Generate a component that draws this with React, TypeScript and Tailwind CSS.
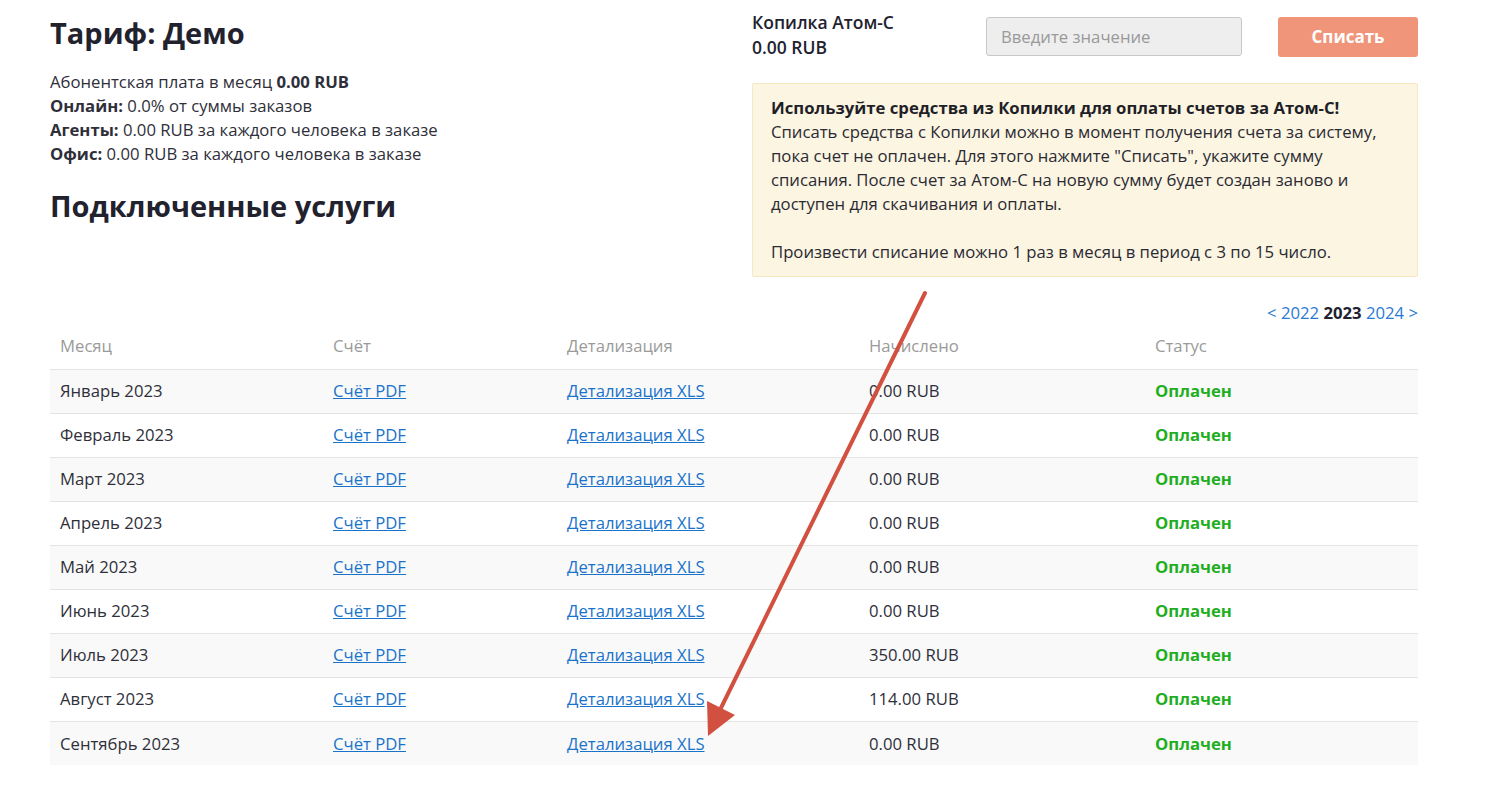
import React from "react"

const months = [
  { name: "Январь 2023", sum: "0.00 RUB" },
  { name: "Февраль 2023", sum: "0.00 RUB" },
  { name: "Март 2023", sum: "0.00 RUB" },
  { name: "Апрель 2023", sum: "0.00 RUB" },
  { name: "Май 2023", sum: "0.00 RUB" },
  { name: "Июнь 2023", sum: "0.00 RUB" },
  { name: "Июль 2023", sum: "350.00 RUB" },
  { name: "Август 2023", sum: "114.00 RUB" },
  { name: "Сентябрь 2023", sum: "0.00 RUB" },
]

export default function App() {
  return (
    <div className="relative min-h-[807px] bg-white text-[#2f2f3a] font-['Open_Sans',sans-serif] text-[16.7px]">
      <div className="w-[1368px] ml-[50px]">

        {/* Top */}
        <div className="flex justify-between">
          <div className="pt-[15px]">
            <h1 className="text-[29px] leading-[36px] font-bold text-[#22222f]">Тариф: Демо</h1>
            <div className="mt-[19px] leading-[24px]">
              <div>Абонентская плата в месяц <b>0.00 RUB</b></div>
              <div><b>Онлайн:</b> 0.0% от суммы заказов</div>
              <div><b>Агенты:</b> 0.00 RUB за каждого человека в заказе</div>
              <div><b>Офис:</b> 0.00 RUB за каждого человека в заказе</div>
            </div>
            <h2 className="mt-[22px] text-[29px] leading-[36px] font-bold text-[#22222f]">Подключенные услуги</h2>
          </div>

          <div className="w-[666px] pt-[10px]">
            <div className="flex items-start">
              <div className="w-[234px] text-[17.5px] leading-[25px] font-semibold text-[#22222f]">
                <div>Копилка Атом-С</div>
                <div>0.00 RUB</div>
              </div>
              <input
                placeholder="Введите значение"
                className="mt-[7px] w-[256px] h-[39px] px-[14px] bg-[#eeeeee] border border-[#c8c8c8] rounded-[3px] text-[16.7px] placeholder:text-[#999] outline-none"
              />
              <button className="ml-auto mt-[7px] w-[140px] h-[40px] bg-[#f0957a] rounded-[3px] text-white font-bold text-[17px]">
                Списать
              </button>
            </div>

            <div className="mt-[23px] bg-[#fcf5e1] border border-[#f6e8c3] rounded-[2px] px-[18px] pt-[12px] pb-[12px] leading-[24px] text-[#2a2a33]">
              <div className="font-bold text-[#1f1f28]">Используйте средства из Копилки для оплаты счетов за Атом-С!</div>
              <div>
                Списать средства с Копилки можно в момент получения счета за систему,
                пока счет не оплачен. Для этого нажмите "Списать", укажите сумму
                списания. После счет за Атом-С на новую сумму будет создан заново и
                доступен для скачивания и оплаты.
              </div>
              <div className="mt-[24px]">Произвести списание можно 1 раз в месяц в период с 3 по 15 число.</div>
            </div>
          </div>
        </div>

        {/* Year nav */}
        <div className="mt-[24px] text-right leading-[24px] text-[#2a7ad2]">
          <span>&lt; 2022</span> <b className="text-[#22222f]">2023</b> <span>2024 &gt;</span>
        </div>

        {/* Table */}
        <table className="w-full border-collapse">
          <thead>
            <tr className="h-[44px] text-left text-[#9a9a9a]">
              <th className="w-[273px] pl-[10px] pb-[2px] font-normal">Месяц</th>
              <th className="w-[234px] pl-[10px] pb-[2px] font-normal">Счёт</th>
              <th className="w-[302px] pl-[10px] pb-[2px] font-normal">Детализация</th>
              <th className="w-[286px] pl-[10px] pb-[2px] font-normal">Начислено</th>
              <th className="pl-[10px] pb-[2px] font-normal">Статус</th>
            </tr>
          </thead>
          <tbody>
            {months.map((m, i) => (
              <tr key={m.name} className={`h-[44px] border-t border-[#e4e4e4] ${i % 2 === 0 ? "bg-[#f9f9f9]" : "bg-white"}`}>
                <td className="pl-[10px]">{m.name}</td>
                <td className="pl-[10px]"><a className="text-[#1a73c9] underline">Счёт PDF</a></td>
                <td className="pl-[10px]"><a className="text-[#1a73c9] underline">Детализация XLS</a></td>
                <td className="pl-[10px]">{m.sum}</td>
                <td className="pl-[10px] font-bold text-[#1fae1f]">Оплачен</td>
              </tr>
            ))}
          </tbody>
        </table>
      </div>

      {/* Annotation arrow */}
      <svg className="absolute inset-0 pointer-events-none" width="1493" height="807">
        <line x1="925" y1="293" x2="718" y2="714" stroke="#d2503f" strokeWidth="4" strokeLinecap="round" />
        <polygon points="708,736 707,701 735,715" fill="#d2503f" />
      </svg>
    </div>
  )
}
